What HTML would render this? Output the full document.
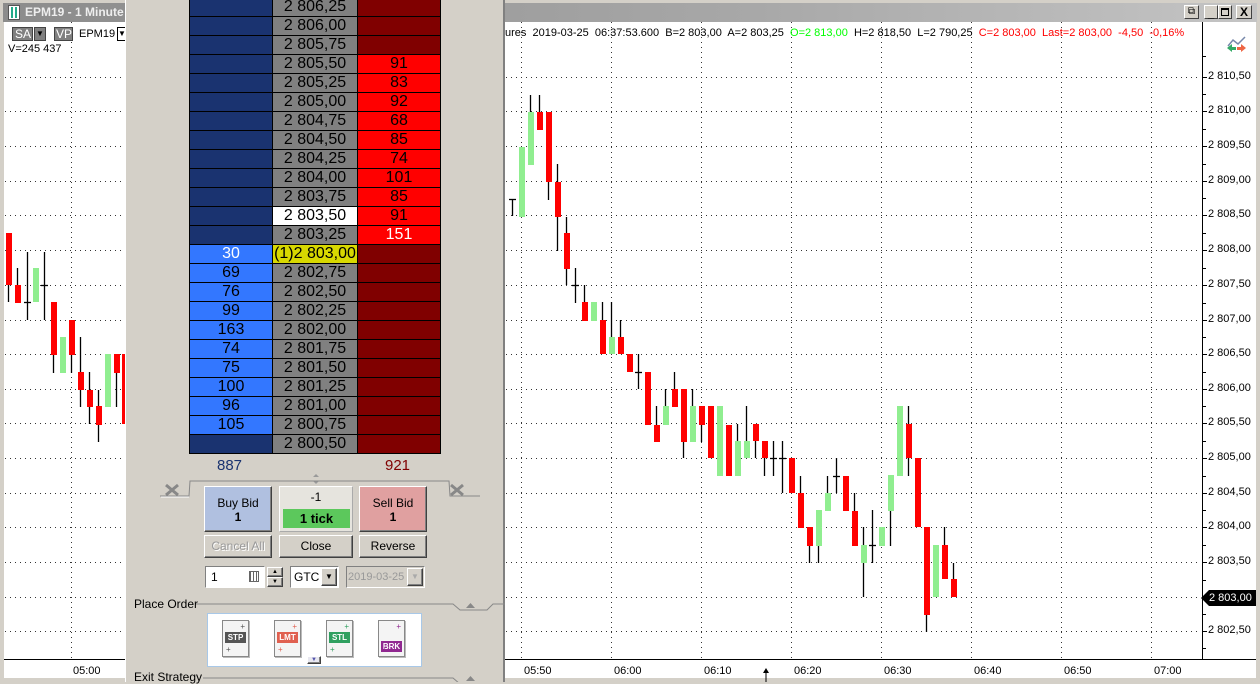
<!DOCTYPE html>
<html><head><meta charset="utf-8">
<style>
*{margin:0;padding:0;box-sizing:border-box}
body{width:1260px;height:682px;overflow:hidden;position:relative;background:#d4d0c8;font-family:"Liberation Sans",Arial,sans-serif}
.a{position:absolute}
.t12{font-size:11px;white-space:nowrap}
.dom div.r{position:absolute;height:20px;border:1px solid #000;font-size:16px;line-height:18px;text-align:center;color:#000}
.btn{position:absolute;background:#d4d0c8;border:1px solid;border-color:#fff #404040 #404040 #fff;box-shadow:inset -1px -1px 0 #808080;font-size:12px;text-align:center}
</style></head><body>
<div class="a" style="left:0;top:0;width:1260px;height:682px;background:#d4d0c8"></div>
<div class="a" style="left:3px;top:3px;width:1254px;height:19px;background:linear-gradient(90deg,#8c8c8c,#a8a8a8 60%,#c4c4c4)"></div>
<div class="a" style="left:8px;top:5px;width:12px;height:15px;background:#fff;border:1px solid #555"></div>
<div class="a" style="left:11px;top:7px;width:2px;height:11px;background:#2a8"></div>
<div class="a" style="left:15px;top:7px;width:2px;height:11px;background:#2a8"></div>
<div class="a" style="left:25px;top:5px;font-size:12px;font-weight:bold;color:#eee;white-space:nowrap">EPM19 - 1 Minute</div>
<div class="a" style="left:1184px;top:5px;width:15px;height:14px;background:#d4d0c8;border:1px solid #fff;border-right-color:#404040;border-bottom-color:#404040;font-size:10px;text-align:center;line-height:11px">⧉</div>
<div class="a" style="left:1204px;top:5px;width:14px;height:14px;background:#d4d0c8;border:1px solid #fff;border-right-color:#404040;border-bottom-color:#404040;font-size:11px;text-align:center;line-height:16px;font-weight:bold">_</div>
<div class="a" style="left:1218px;top:5px;width:14px;height:14px;background:#d4d0c8;border:1px solid #fff;border-right-color:#404040;border-bottom-color:#404040"><div style="margin:2px;width:8px;height:8px;border:1px solid #000;border-top-width:2px"></div></div>
<div class="a" style="left:1236px;top:5px;width:16px;height:14px;background:#d4d0c8;border:1px solid #fff;border-right-color:#404040;border-bottom-color:#404040;font-size:12px;text-align:center;line-height:12px;font-weight:bold">X</div>

<div class="a" style="left:4px;top:22px;width:1252px;height:656px;background:#fff"></div>
<svg class="a" style="left:0;top:0" width="1260" height="682" id="ch">
<g id="grid" stroke="#333" stroke-width="1" stroke-dasharray="1,4"></g>
<g id="cd"></g>
<line x1="1202.5" y1="22" x2="1202.5" y2="660" stroke="#000"/>
<line x1="4" y1="659.5" x2="1256" y2="659.5" stroke="#000"/>
<g id="ticks" stroke="#000"></g>
<polygon points="1201,598 1209,590 1256,590 1256,606 1209,606" fill="#000"/>
<line x1="766" y1="670" x2="766" y2="682" stroke="#000"/><polygon points="763,673 766,668 769,673" fill="#000"/>
<g fill="none" stroke="#78a" stroke-width="1.5"><polyline points="1228,46 1233,40 1238,44 1245,37"/></g>
<polygon points="1227,48 1232,44 1232,52" fill="#3a6"/><rect x="1231" y="47" width="5" height="3" fill="#3a6"/>
<polygon points="1246,48 1241,44 1241,52" fill="#e64"/><rect x="1237" y="47" width="5" height="3" fill="#e64"/>
</svg>
<div id="lbl"></div>
<div class="a" style="left:12px;top:27px;width:21px;height:14px;background:#808080;border:1px solid #444;color:#fff;font-size:12px;line-height:12px;padding-left:2px">SA</div>
<div class="a" style="left:34px;top:27px;width:12px;height:14px;background:#808080;border:1px solid #444;color:#000;font-size:8px;line-height:12px;text-align:center">▼</div>
<div class="a" style="left:54px;top:27px;width:19px;height:14px;background:#808080;border:1px solid #444;color:#fff;font-size:12px;line-height:12px;padding-left:1px">VP</div>
<div class="a t12" style="left:79px;top:28px;color:#000">EPM19</div>
<div class="a" style="left:117px;top:27px;width:10px;height:14px;border:1px solid #000;background:#fff;font-size:8px;line-height:12px">▼</div>
<div class="a t12" style="left:8px;top:43px;color:#000">V=245 437</div>
<div class="a t12" style="left:505px;top:27px;color:#000">ures&nbsp; 2019-03-25&nbsp; 06:37:53.600&nbsp; B=2 803,00&nbsp; A=2 803,25&nbsp; <span style="color:#0f0">O=2 813,00</span>&nbsp; H=2 818,50&nbsp; L=2 790,25&nbsp; <span style="color:#f00">C=2 803,00&nbsp; Last=2 803,00&nbsp; -4,50&nbsp; -0,16%</span></div>
<div class="a t12" style="left:1209px;top:592px;color:#fff">2 803,00</div>

<div class="a" style="left:125px;top:0;width:380px;height:682px;background:#d4d0c8;border-left:1px solid #fff;border-right:2px solid #808080"></div>
<div class="dom" id="dom"></div>
<div class="a" style="left:217px;top:457px;font-size:15px;color:#1a3370">887</div>
<div class="a" style="left:385px;top:457px;font-size:15px;color:#800000">921</div>
<svg class="a" style="left:125px;top:470px" width="380" height="212">
<polygon points="188,7 194,7 191,4" fill="#999"/><polygon points="188,11 194,11 191,14" fill="#999"/>
<polyline points="35,26 64,26 65,11 324,11 325,26 355,26" fill="none" stroke="#888"/>
<polyline points="36,27 64,27" fill="none" stroke="#fff"/>
<path d="M41,15 L53,25 M53,15 L41,25" stroke="#888" stroke-width="3"/>
<path d="M326,15 L338,25 M338,15 L326,25" stroke="#888" stroke-width="3"/>
<polyline points="70,134 328,134 335,140 362,140 368,134 380,134" fill="none" stroke="#888"/>
<polygon points="341,138 350,138 345.5,133" fill="#888"/>
<polyline points="78,208 328,208 335,214" fill="none" stroke="#888"/>
<polygon points="341,211 350,211 345.5,206" fill="#888"/>
</svg>
<div class="btn" style="left:204px;top:486px;width:68px;height:46px;background:#b0c0e0;line-height:14px;padding-top:9px">Buy Bid<br><b>1</b></div>
<div class="btn" style="left:279px;top:486px;width:74px;height:46px;background:#e6e4de;border-color:#fff #aaa #aaa #fff;box-shadow:none"><div style="font-size:12px;padding-top:3px;color:#000">-1</div><div style="position:absolute;left:3px;top:22px;width:67px;height:19px;background:#5cc85c;font-size:13px;font-weight:bold;line-height:19px">1 tick</div></div>
<div class="btn" style="left:359px;top:486px;width:68px;height:46px;background:#e0a0a0;line-height:14px;padding-top:9px">Sell Bid<br><b>1</b></div>
<div class="btn" style="left:204px;top:535px;width:68px;height:23px;line-height:21px;color:#999;text-shadow:1px 1px 0 #fff">Cancel All</div>
<div class="btn" style="left:279px;top:535px;width:74px;height:23px;line-height:21px">Close</div>
<div class="btn" style="left:359px;top:535px;width:68px;height:23px;line-height:21px">Reverse</div>
<div class="a" style="left:205px;top:566px;width:60px;height:22px;background:#fff;border:1px solid;border-color:#808080 #fff #fff #808080;font-size:12px;padding:3px 0 0 5px">1<span style="position:absolute;left:43px;top:4px;width:10px;height:11px;border:1px solid #666;background:repeating-linear-gradient(90deg,#666 0 1px,#fff 1px 3px)"></span></div>
<div class="btn" style="left:267px;top:567px;width:16px;height:10px;font-size:6px;line-height:8px">▲</div>
<div class="btn" style="left:267px;top:577px;width:16px;height:10px;font-size:6px;line-height:8px">▼</div>
<div class="a" style="left:290px;top:566px;width:49px;height:22px;background:#fff;border:1px solid;border-color:#808080 #fff #fff #808080;font-size:12px;padding:3px 0 0 3px">GTC<div class="btn" style="left:30px;top:1px;width:16px;height:18px;font-size:8px;line-height:16px">▼</div></div>
<div class="a" style="left:346px;top:566px;width:79px;height:22px;background:#d4d0c8;border:1px solid;border-color:#808080 #fff #fff #808080;font-size:11px;padding:4px 0 0 1px;color:#999;white-space:nowrap;overflow:hidden">2019-03-25<div class="btn" style="left:60px;top:1px;width:16px;height:18px;font-size:8px;line-height:16px;color:#aaa">▼</div></div>
<div class="a" style="left:134px;top:597px;font-size:12px;color:#000;white-space:nowrap">Place Order</div>
<div class="a" style="left:207px;top:613px;width:215px;height:54px;background:#fff;border:1px solid #a8c8e8"></div>
<div id="icons"></div>
<div class="btn" style="left:307px;top:656px;width:14px;height:8px;font-size:6px;line-height:6px;color:#55a;background:#e8e8f0">▼</div>
<div class="a" style="left:134px;top:670px;font-size:12px;color:#000;white-space:nowrap">Exit Strategy</div>

<script>
const NS="http://www.w3.org/2000/svg";
function el(p,t,a){const e=document.createElementNS(NS,t);for(const k in a)e.setAttribute(k,a[k]);p.appendChild(e);return e}
const g=document.getElementById('grid');
const ys=[77,111,146,181,215,250,285,320,354,389,423,458,493,527,562,597,631];
ys.forEach(y=>{el(g,'line',{x1:5,y1:y+.5,x2:124,y2:y+.5});el(g,'line',{x1:506,y1:y+.5,x2:1201,y2:y+.5})});
[71].forEach(x=>el(g,'line',{x1:x+.5,y1:22,x2:x+.5,y2:659}));
[521,611,701,791,881,971,1061,1151].forEach(x=>el(g,'line',{x1:x+.5,y1:22,x2:x+.5,y2:659}));
const tk=document.getElementById('ticks');
for(let i=0;i<ys.length;i++){el(tk,'line',{x1:1202,y1:ys[i]+.5,x2:1207,y2:ys[i]+.5});if(i<ys.length-1){const m=Math.round((ys[i]+ys[i+1])/2)+.5;el(tk,'line',{x1:1202,y1:m,x2:1206,y2:m})}}
el(tk,'line',{x1:1202,y1:56.5,x2:1206,y2:56.5});el(tk,'line',{x1:1202,y1:648.5,x2:1206,y2:648.5});
const L=document.getElementById('lbl');let h='';
const pr=['2 810,50','2 810,00','2 809,50','2 809,00','2 808,50','2 808,00','2 807,50','2 807,00','2 806,50','2 806,00','2 805,50','2 805,00','2 804,50','2 804,00','2 803,50',null,'2 802,50'];
pr.forEach((p,i)=>{if(p)h+=`<div class="a t12" style="left:1208px;top:${ys[i]-7}px;color:#000">${p}</div>`});
h+=`<div class="a t12" style="left:73px;top:665px;color:#000">05:00</div>`;
['05:50','06:00','06:10','06:20','06:30','06:40','06:50','07:00'].forEach((t,i)=>{h+=`<div class="a t12" style="left:${524+90*i}px;top:665px;color:#000">${t}</div>`});
L.innerHTML=h;
const R='#ff0000',G='#90ee90';
const c=[
[8,233,285,233,302,R],[17,285,303,268,303,R],[27,302,302,252,320,null],[35,268,302,268,302,G],[44,285,285,252,320,null],[53,302,355,302,373,R],[62,337,373,337,373,G],[71,320,355,320,373,R],[80,372,390,337,407,R],[89,390,407,372,424,R],[98,406,425,390,442,R],[107,354,407,354,407,G],[116,354,373,354,407,R],[124,354,424,354,424,R],
[512,199,199,199,216,null],[521,147,217,147,217,G],[530,112,165,95,165,G],[539,112,130,95,130,R],[548,112,182,112,200,R],[557,182,217,164,251,R],[566,233,269,217,285,R],[575,285,285,268,303,null],[584,302,321,285,321,R],[593,302,321,302,321,G],[602,320,354,302,354,R],[611,337,354,302,354,G],[620,337,354,320,354,R],[629,354,372,354,372,R],[638,372,372,354,389,null],[647,372,425,372,425,R],[656,425,442,406,442,R],[665,406,425,389,425,G],[674,389,407,372,407,R],[683,389,442,389,458,R],[692,406,442,389,442,G],[701,406,425,406,442,R],[710,406,458,406,458,R],[719,406,476,406,476,G],[728,425,476,425,476,R],
[737,441,476,424,476,G],[746,441,458,406,458,G],[755,424,441,424,458,R],[764,441,458,441,476,R],[773,458,458,441,476,null],[782,458,458,441,493,null],[791,458,493,458,493,R],[800,493,528,476,528,R],[809,527,546,527,563,R],[818,510,546,510,563,G],[827,493,511,476,511,G],[836,476,476,458,493,null],[845,476,511,476,511,R],[854,511,546,493,546,R],[863,545,563,527,597,G],[872,545,545,510,563,null],[881,527,546,527,546,G],[890,475,511,475,546,G],[899,406,476,406,476,G],[908,424,458,406,476,R],[917,458,527,458,527,R],[926,527,615,527,632,R],[935,545,597,545,597,G],[944,545,579,527,579,R],[953,579,597,563,597,R]];
const cd=document.getElementById('cd');
c.forEach(([x,bt,bb,wt,wb,col])=>{
 el(cd,'line',{x1:x+.5,y1:wt,x2:x+.5,y2:wb,stroke:'#000','stroke-width':1.3});
 if(col){el(cd,'rect',{x:x-2,y:bt,width:6,height:Math.max(bb-bt,2),fill:col})}
 else el(cd,'line',{x1:x-3,y1:bt+.5,x2:x+4,y2:bt+.5,stroke:'#000','stroke-width':1.3});
});
const D=document.getElementById('dom');let d='';
const prices=['2 806,25','2 806,00','2 805,75','2 805,50','2 805,25','2 805,00','2 804,75','2 804,50','2 804,25','2 804,00','2 803,75','2 803,50','2 803,25','(1)2 803,00','2 802,75','2 802,50','2 802,25','2 802,00','2 801,75','2 801,50','2 801,25','2 801,00','2 800,75','2 800,50'];
const asks=['','','','91','83','92','68','85','74','101','85','91','151'];
const bids=['','','','','','','','','','','','','','30','69','76','99','163','74','75','100','96','105',''];
prices.forEach((p,i)=>{const t=-3+19*i;
 const bb=(i>=13&&i<=22)?'#3377ff':'#1a3370';
 const bc=i==13?'#fff':'#000';
 const pb=i==11?'#fff':(i==13?'#d8d800':'#808080');
 const ab=(i>=3&&i<=12)?'#ff0000':'#800000';
 const ac=i==12?'#fff':'#000';
 d+=`<div class="r" style="left:189px;top:${t}px;width:84px;background:${bb};color:${bc}">${bids[i]}</div>`;
 d+=`<div class="r" style="left:272px;top:${t}px;width:86px;background:${pb}">${p}</div>`;
 d+=`<div class="r" style="left:357px;top:${t}px;width:84px;background:${ab};color:${ac}">${asks[i]||''}</div>`;
});
D.innerHTML=d;
const I=document.getElementById('icons');let ic='';
[[222,'STP','#555'],[274,'LMT','#e06050'],[326,'STL','#30a060'],[378,'BRK','#902890']].forEach(([x,t,c])=>{
 ic+=`<div class="a" style="left:${x}px;top:620px;width:27px;height:37px;background:#f4f4f4;border:1px solid #888;box-shadow:1px 1px 0 #bbb"><div style="position:absolute;left:2px;top:${t=='BRK'?20:11}px;width:21px;height:11px;background:${c};color:#fff;font-size:8px;font-weight:bold;line-height:11px;text-align:center">${t}</div><div style="position:absolute;right:3px;top:2px;color:${c};font-size:8px;line-height:8px">+</div><div style="position:absolute;left:3px;bottom:2px;color:${c};font-size:8px;line-height:8px">+</div></div>`;
});
I.innerHTML=ic;
</script>
</body></html>
